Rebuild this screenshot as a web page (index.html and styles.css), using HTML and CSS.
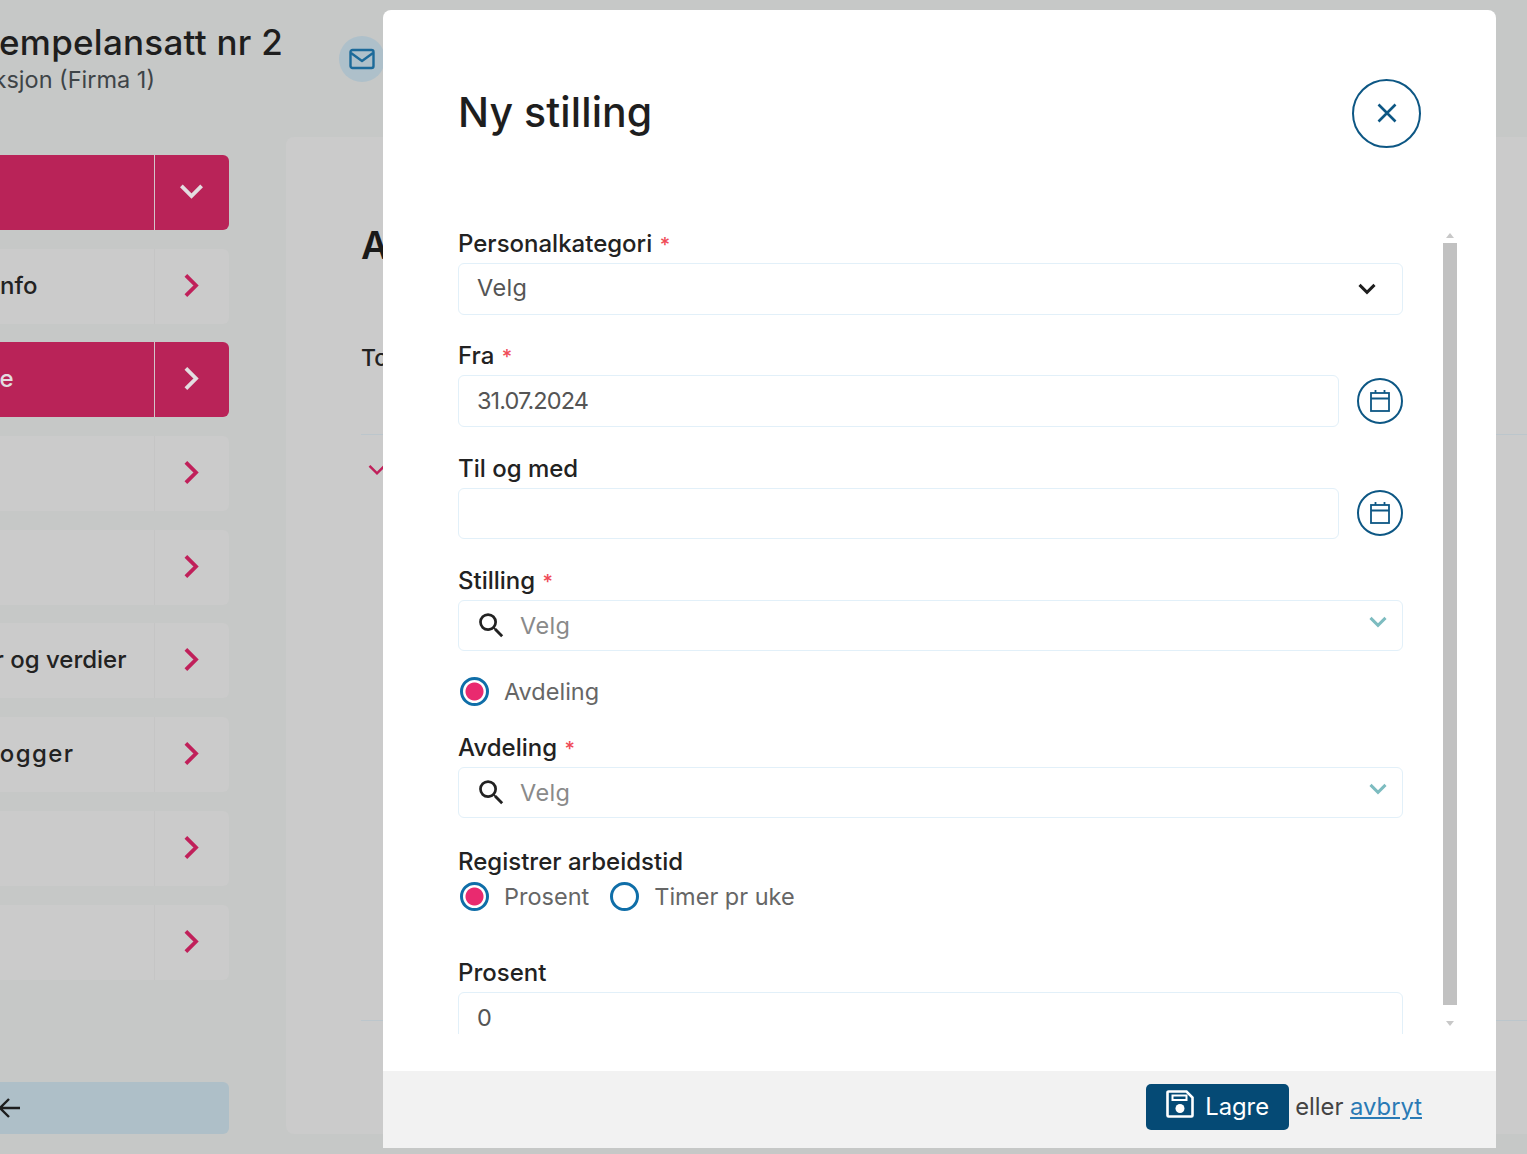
FILE: index.html
```html
<!DOCTYPE html>
<html lang="no">
<head>
<meta charset="utf-8">
<title>Ny stilling</title>
<link rel="stylesheet" href="styles.css">
</head>
<body>
<div class="page">
  <header class="top">
    <div class="who">
      <div class="who-name">Eksempelansatt nr 2</div>
      <div class="who-sub">Produksjon (Firma 1)</div>
    </div>
    <span class="mail">
      <svg width="28" height="24" viewBox="0 0 28 24" fill="none" stroke="#1c6a9a" stroke-width="2.400" stroke-linejoin="round"><rect x="2.500" y="3" width="23" height="18" rx="2"/><path d="M3 6l11 8 11-8"/></svg>
    </span>
  </header>
  <div class="main">
    <aside class="side">
      <nav class="menu">
        <div class="row active"><span class="row-label"></span><span class="row-arrow"><svg class="chev" viewBox="0 0 24 24"><path d="M3 7l9 9 9-9"/></svg></span></div>
        <div class="row"><span class="row-label pad-info">Grunninfo</span><span class="row-arrow"><svg class="chev" viewBox="0 0 24 24"><path d="M7 3l9 9-9 9"/></svg></span></div>
        <div class="row active"><span class="row-label pad-e">Ansatte</span><span class="row-arrow"><svg class="chev" viewBox="0 0 24 24"><path d="M7 3l9 9-9 9"/></svg></span></div>
        <div class="row"><span class="row-label"></span><span class="row-arrow"><svg class="chev" viewBox="0 0 24 24"><path d="M7 3l9 9-9 9"/></svg></span></div>
        <div class="row"><span class="row-label"></span><span class="row-arrow"><svg class="chev" viewBox="0 0 24 24"><path d="M7 3l9 9-9 9"/></svg></span></div>
        <div class="row"><span class="row-label pad-verdier">Timer og verdier</span><span class="row-arrow"><svg class="chev" viewBox="0 0 24 24"><path d="M7 3l9 9-9 9"/></svg></span></div>
        <div class="row"><span class="row-label pad-logger">logger</span><span class="row-arrow"><svg class="chev" viewBox="0 0 24 24"><path d="M7 3l9 9-9 9"/></svg></span></div>
        <div class="row"><span class="row-label"></span><span class="row-arrow"><svg class="chev" viewBox="0 0 24 24"><path d="M7 3l9 9-9 9"/></svg></span></div>
        <div class="row"><span class="row-label"></span><span class="row-arrow"><svg class="chev" viewBox="0 0 24 24"><path d="M7 3l9 9-9 9"/></svg></span></div>
      </nav>
      <div class="back">
        <svg width="24" height="24" viewBox="0 0 24 24" fill="none" stroke="#1d1d1d" stroke-width="2.400"><path d="M23 12H3M12 3l-9 9 9 9"/></svg>
      </div>
    </aside>
    <section class="panel">
      <h2 class="panel-title">Ansatt</h2>
      <div class="panel-sub">Totalt</div>
      <div class="panel-list">
        <svg class="panel-chev" viewBox="0 0 24 24"><path d="M3 7l9 9 9-9"/></svg>
      </div>
    </section>
  </div>
</div>

<div class="modal">
  <div class="modal-head">
    <h1 class="modal-title">Ny stilling</h1>
    <button class="close" type="button" aria-label="Lukk">
      <svg width="24" height="24" viewBox="0 0 24 24" fill="none" stroke="#0d5784" stroke-width="2.600"><path d="M3.500 3.500l17 17M20.500 3.500l-17 17"/></svg>
    </button>
  </div>
  <div class="modal-body">
    <form class="form">
      <div class="field">
        <div class="label">Personalkategori <span class="req">*</span></div>
        <div class="input"><span class="value value-up">Velg</span><svg class="sel-chev" viewBox="0 0 24 24"><path d="M3 7l9 9 9-9"/></svg></div>
      </div>
      <div class="field">
        <div class="label">Fra <span class="req">*</span></div>
        <div class="date-row">
          <div class="input"><span class="value value-date">31.07.2024</span></div>
          <button class="cal" type="button" aria-label="Kalender"><svg width="24" height="26" viewBox="0 0 24 26" fill="none" stroke="#0d5784" stroke-width="1.800"><rect x="3" y="5" width="18" height="18"/><path d="M3 10.500h18M7.500 2v3M16.500 2v3"/></svg></button>
        </div>
      </div>
      <div class="field">
        <div class="label">Til og med</div>
        <div class="date-row">
          <div class="input"></div>
          <button class="cal" type="button" aria-label="Kalender"><svg width="24" height="26" viewBox="0 0 24 26" fill="none" stroke="#0d5784" stroke-width="1.800"><rect x="3" y="5" width="18" height="18"/><path d="M3 10.500h18M7.500 2v3M16.500 2v3"/></svg></button>
        </div>
      </div>
      <div class="field field-tight">
        <div class="label">Stilling <span class="req">*</span></div>
        <div class="input search">
          <svg class="mag" viewBox="0 0 24 24"><path d="M15.500 14h-.79l-.28-.27A6.471 6.471 0 0 0 16 9.500 6.500 6.500 0 1 0 9.500 16c1.610 0 3.090-.59 4.230-1.570l.27.28v.79l5 4.990L20.490 19l-4.990-5zm-6 0C7.010 14 5 11.990 5 9.500S7.010 5 9.500 5 14 7.010 14 9.500 11.990 14 9.500 14z"/></svg>
          <span class="placeholder">Velg</span>
          <svg class="teal-chev" viewBox="0 0 24 24"><path d="M3 7l9 9 9-9"/></svg>
        </div>
      </div>
      <div class="radios radios-solo">
        <span class="radio on"></span><span class="radio-text">Avdeling</span>
      </div>
      <div class="field field-wide">
        <div class="label">Avdeling <span class="req">*</span></div>
        <div class="input search">
          <svg class="mag" viewBox="0 0 24 24"><path d="M15.500 14h-.79l-.28-.27A6.471 6.471 0 0 0 16 9.500 6.500 6.500 0 1 0 9.500 16c1.610 0 3.090-.59 4.230-1.570l.27.28v.79l5 4.990L20.490 19l-4.990-5zm-6 0C7.010 14 5 11.990 5 9.500S7.010 5 9.500 5 14 7.010 14 9.500 11.990 14 9.500 14z"/></svg>
          <span class="placeholder">Velg</span>
          <svg class="teal-chev" viewBox="0 0 24 24"><path d="M3 7l9 9 9-9"/></svg>
        </div>
      </div>
      <div class="label">Registrer arbeidstid</div>
      <div class="radios radios-work">
        <span class="radio on"></span><span class="radio-text">Prosent</span>
        <span class="radio radio-second"></span><span class="radio-text">Timer pr uke</span>
      </div>
      <div class="field">
        <div class="label">Prosent</div>
        <div class="input"><span class="value">0</span></div>
      </div>
    </form>
    <div class="scrollbar">
      <span class="sb-up"></span>
      <span class="sb-thumb"></span>
      <span class="sb-down"></span>
    </div>
  </div>
  <footer class="modal-foot">
    <button class="save" type="button">
      <svg class="save-icon" width="28" height="28" viewBox="0 0 28 28" fill="none"><path d="M2.500 1.500h18l6 6v18a1 1 0 0 1-1 1h-23a1 1 0 0 1-1-1v-23a1 1 0 0 1 1-1z" stroke="#fff" stroke-width="2.600"/><path d="M6.500 5.500h14v4.500h-14z" stroke="#fff" stroke-width="2"/><circle cx="14" cy="18.500" r="4.500" fill="#fff"/></svg>
      Lagre
    </button>
    <span class="or">eller <a class="cancel" href="#">avbryt</a></span>
  </footer>
</div>
</body>
</html>
```

FILE: styles.css
```css
* { box-sizing: border-box; }

html, body {
  margin: 0;
  height: 1154px;
  overflow: hidden;
}

body {
  position: relative;
  background: #c6c8c7;
  font-family: "Inter", "Open Sans", sans-serif;
  color: #222;
}

/* Page behind the dialog, scrolled 120px to the left */
.page {
  margin-left: -120px;
  width: 1647px;
  height: 1154px;
  display: flex;
  flex-direction: column;
  padding-bottom: 20px;
}

.top {
  height: 137px;
  flex: none;
  display: flex;
  align-items: flex-start;
}

.who {
  width: 403px;
  padding-top: 20px;
  text-align: right;
  white-space: nowrap;
}

.who-name {
  font-size: 35px;
  line-height: 44px;
  font-weight: 500;
  color: #1e1e1e;
  letter-spacing: 0.25px;
}

.who-sub {
  font-size: 23.500px;
  line-height: 32px;
  color: #3e4447;
  padding-right: 128px;
}

.mail {
  margin: 36px 0 0 56px;
  width: 46px;
  height: 46px;
  border-radius: 50%;
  background: #aec0ca;
  display: flex;
  align-items: center;
  justify-content: center;
  flex: none;
}

.main {
  flex: 1;
  display: flex;
  gap: 57px;
  min-height: 0;
}

.side {
  width: 349px;
  flex: none;
  padding-top: 18px;
  display: flex;
  flex-direction: column;
  justify-content: space-between;
}

.menu {
  display: flex;
  flex-direction: column;
  gap: 18.700px;
}

.row {
  height: 75px;
  display: flex;
  background: #cbcbcb;
  border-radius: 6px;
  color: #222;
  font-size: 24px;
  font-weight: 500;
}

.row.active {
  background: #b92358;
  color: #e3dde0;
}

.row-label {
  flex: 1;
  min-width: 0;
  display: flex;
  align-items: center;
  justify-content: flex-end;
  white-space: nowrap;
  padding-bottom: 2px;
}

.pad-info { padding-right: 116px; }
.pad-e { padding-right: 140px; }
.pad-verdier { padding-right: 27px; }
.pad-logger { padding-right: 79px; letter-spacing: 1.400px; }

.row-arrow {
  width: 75.500px;
  flex: none;
  border-left: 1.500px solid #c5c5c5;
  display: flex;
  align-items: center;
  justify-content: center;
  padding-bottom: 2px;
}

.row.active .row-arrow { border-left-color: #d4c4ca; }

.chev {
  width: 27px;
  height: 27px;
  fill: none;
  stroke: #c0205a;
  stroke-width: 3.400;
}

.row.active .chev { stroke: #e3dde0; }

.back {
  height: 52px;
  background: #aebfc8;
  border-radius: 6px;
  display: flex;
  align-items: center;
  justify-content: flex-end;
  padding-right: 208px;
}

.panel {
  flex: 1;
  background: #cbcbcb;
  border-radius: 8px 0 0 8px;
  padding: 86px 0 0 75px;
}

.panel-title {
  margin: 0;
  font-size: 38px;
  line-height: 44px;
  font-weight: 600;
  color: #1a1a1a;
}

.panel-sub {
  margin-top: 76px;
  font-size: 23px;
  line-height: 30px;
  font-weight: 500;
  color: #222;
}

.panel-list {
  margin-top: 61px;
  height: 587px;
  border-top: 1px solid #bcc6cc;
  border-bottom: 1px solid #bcc6cc;
}

.panel-chev {
  display: block;
  margin: 25px 0 0 6px;
  width: 20px;
  height: 20px;
  fill: none;
  stroke: #c0205a;
  stroke-width: 3;
}

/* Dialog */
.modal {
  position: absolute;
  left: 383px;
  top: 10px;
  width: 1113px;
  height: 1138px;
  background: #fff;
  border-radius: 8px 8px 0 0;
  display: flex;
  flex-direction: column;
}

.modal-head {
  height: 222px;
  flex: none;
  padding: 69px 75px 0;
  display: flex;
  justify-content: space-between;
  align-items: flex-start;
}

.modal-title {
  margin: 0;
  font-size: 41px;
  line-height: 67px;
  font-weight: 500;
  letter-spacing: 0.100px;
  color: #1e1e1e;
}

.close {
  width: 69px;
  height: 69px;
  padding: 0 0 2px;
  border: 2px solid #0d5784;
  border-radius: 50%;
  background: #fff;
  display: flex;
  align-items: center;
  justify-content: center;
}

.modal-body {
  height: 802px;
  flex: none;
  padding: 0 39px 0 75px;
  display: flex;
  gap: 40px;
  overflow: hidden;
}

.form {
  width: 945px;
  flex: none;
}

.field { margin-bottom: 29.700px; }
.field-tight { margin-bottom: 20.400px; }
.field-wide { margin-bottom: 31.500px; }

.label {
  height: 31px;
  line-height: 24px;
  font-size: 24px;
  font-weight: 500;
  color: #222;
  white-space: nowrap;
}

.req {
  color: #f04b58;
  font-size: 20px;
  line-height: 1;
  margin-left: 1px;
}

.input {
  flex: 1;
  height: 51.600px;
  border: 1.500px solid #e2f0f9;
  border-radius: 6px;
  padding: 0 18px;
  display: flex;
  align-items: center;
  font-size: 23.500px;
  color: #555;
  background: #fff;
}

.value { color: #555; }
.value-up { margin-top: -3px; letter-spacing: 0.400px; }
.value-date { margin-top: -2px; letter-spacing: -0.900px; }

.sel-chev {
  margin-left: auto;
  margin-right: 7px;
  width: 20px;
  height: 20px;
  fill: none;
  stroke: #1e1e1e;
  stroke-width: 3.600;
}

.search { padding-left: 16px; position: relative; }

.mag {
  width: 33px;
  height: 33px;
  flex: none;
  fill: #222;
}

.placeholder {
  margin-left: 12px;
  color: #8a8a8a;
  letter-spacing: 0.400px;
}

.teal-chev {
  margin-left: auto;
  margin-right: -4px;
  margin-top: -7px;
  width: 20px;
  height: 20px;
  fill: none;
  stroke: #7dbcc0;
  stroke-width: 3.600;
}

.date-row {
  display: flex;
  align-items: center;
  gap: 18px;
}

.cal {
  width: 46px;
  height: 46px;
  padding: 0;
  flex: none;
  border: 2px solid #0d5784;
  border-radius: 50%;
  background: #fff;
  display: flex;
  align-items: center;
  justify-content: center;
}

.radios {
  display: flex;
  align-items: center;
  font-size: 23.500px;
  color: #666;
  padding-left: 2px;
}

.radios-solo { height: 40px; margin-bottom: 24px; }
.radios-work { height: 36px; margin-bottom: 46px; margin-top: -2px; }

.radio {
  width: 29px;
  height: 29px;
  flex: none;
  border: 3.500px solid #0f6ea8;
  border-radius: 50%;
  background: #fff;
  margin-right: 15px;
}

.radio.on {
  background: radial-gradient(circle, #e92a6f 0, #e92a6f 8.500px, #fff 9.500px);
}

.radio-second { margin-left: 21px; }

.scrollbar {
  width: 14px;
  flex: none;
  display: flex;
  flex-direction: column;
  align-items: center;
}

.sb-up, .sb-down {
  width: 0;
  height: 0;
  border-left: 4px solid transparent;
  border-right: 4px solid transparent;
}

.sb-up {
  border-bottom: 5px solid #c8c8c8;
  margin: 1px 0 5px;
}

.sb-down {
  border-top: 5px solid #c8c8c8;
  margin-top: 16px;
}

.sb-thumb {
  width: 14px;
  height: 762px;
  background: #c1c1c1;
}

.modal-foot {
  flex: 1;
  margin-top: 37px;
  background: #f2f2f2;
  padding: 0 74px 6px 0;
  display: flex;
  align-items: center;
  justify-content: flex-end;
  gap: 6px;
  font-size: 23.800px;
}

.save {
  width: 143px;
  height: 46px;
  padding: 0;
  border: 0;
  border-radius: 5px;
  background: #054a75;
  color: #fff;
  font: inherit;
  display: flex;
  align-items: center;
  justify-content: center;
  gap: 11px;
}

.save-icon { margin-top: -5px; }

.or { color: #444; white-space: nowrap; }

.cancel { color: #2a7ab5; }
```
